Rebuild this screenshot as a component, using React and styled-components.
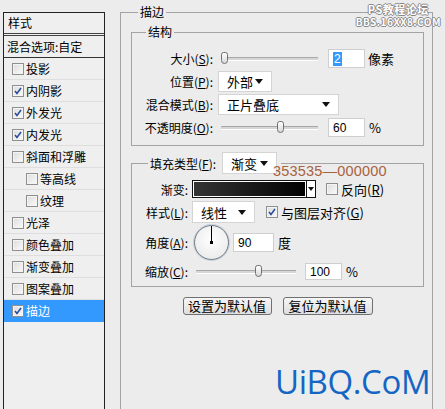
import React from "react";
import styled, { createGlobalStyle } from "styled-components";

const GlobalStyle = createGlobalStyle`
  body {
    margin: 0;
    background: #ececec;
    font-family: "Noto Sans CJK SC", "Liberation Sans", sans-serif;
    font-size: 12px;
    color: #000;
  }
`;

const Page = styled.div`
  position: relative;
  width: 445px;
  height: 409px;
  overflow: hidden;
  display: flex;
  align-items: flex-start;
  background: #ececec;
`;

/* ---------- left style list ---------- */
const StyleList = styled.div`
  box-sizing: border-box;
  width: 102px;
  height: 420px;
  margin: 12px 0 0 3px;
  border: 1px solid #222;
  border-bottom: none;
  background: #efefef;
  display: flex;
  flex-direction: column;
`;

const ListHead = styled.div`
  height: 20px;
  line-height: 20px;
  padding-left: 4px;
  font-size: 12px;
  border-bottom: 3px double #444;
`;

const BlendRow = styled.div`
  height: 21px;
  line-height: 21px;
  padding-left: 3px;
  border-bottom: 1px solid #333;
  white-space: nowrap;
`;

const ListRow = styled.div`
  box-sizing: border-box;
  height: 22px;
  display: flex;
  align-items: center;
  gap: 2px;
  padding-left: ${p => (p.$indent ? 22 : 8)}px;
  border-bottom: 1px solid ${p => (p.$active ? "#3399ff" : "#dedede")};
  background: ${p => (p.$active ? "#3399ff" : "transparent")};
  color: ${p => (p.$active ? "#fff" : "#000")};
  white-space: nowrap;
`;

const Box = styled.span`
  box-sizing: border-box;
  width: 12px;
  height: 12px;
  flex: none;
  border: 1px solid #8e8f8f;
  background: linear-gradient(135deg, #dcdcdc, #fafafa);
  display: flex;
  align-items: center;
  justify-content: center;
  box-shadow: inset 0 0 0 1px #f4f4f4;
`;

const Check = ({ on }) => (
  <Box>
    {on && (
      <svg width="8" height="8" viewBox="0 0 8 8">
        <path d="M1 4 L3 6.5 L7 1" fill="none" stroke="#2b4f9c" strokeWidth="1.6" />
      </svg>
    )}
  </Box>
);

/* ---------- right settings ---------- */
const Main = styled.fieldset`
  box-sizing: border-box;
  width: 313px;
  height: 440px;
  margin: 4px 0 0 15px;
  padding: 4px 8px 0 10px;
  border: 1px solid #a3a3a3;
  min-inline-size: 0;
`;

const Legend = styled.legend`
  margin-left: ${p => p.$offset || 7}px;
  padding: 0 2px;
  line-height: 16px;
`;

const Group = styled.fieldset`
  box-sizing: border-box;
  margin: ${p => p.$top || 0}px 0 0 0;
  padding: ${p => p.$pad};
  border: 1px solid #a3a3a3;
  min-inline-size: 0;
`;

const FillLegend = styled.legend`
  margin-left: 16px;
  padding: 0 4px 0 2px;
  display: flex;
  align-items: center;
  gap: 6px;
  height: 22px;
`;

const Row = styled.div`
  display: flex;
  align-items: center;
  height: ${p => p.$h || 23}px;
`;

const Label = styled.div`
  width: ${p => p.$w}px;
  flex: none;
  text-align: right;
  margin-right: ${p => p.$gap || 5}px;
  white-space: nowrap;
`;

const Track = styled.div`
  position: relative;
  width: ${p => p.$w}px;
  height: 2px;
  margin-left: ${p => p.$ml || 0}px;
  border-top: 1px solid #a8a8a8;
  border-bottom: 1px solid #fff;
  background: #d6d6d6;
`;

const Thumb = styled.div`
  position: absolute;
  top: -6px;
  width: 7px;
  height: 12px;
  box-sizing: border-box;
  border: 1px solid #6f6f6f;
  border-radius: 3px 3px 4px 4px;
  background: linear-gradient(#ffffff, #d8d8d8);
`;

const Slider = ({ w, pos, ml }) => (
  <Track $w={w} $ml={ml}>
    <Thumb style={{ left: pos }} />
  </Track>
);

const Field = styled.div`
  box-sizing: border-box;
  width: ${p => p.$w}px;
  height: ${p => p.$h || 19}px;
  margin-left: ${p => p.$ml || 0}px;
  border: 1px solid #cfcfcf;
  background: #fff;
  display: flex;
  align-items: center;
  padding-left: 4px;
  font-family: "Liberation Sans", Arial, sans-serif;
  font-size: 12px;
`;

const Selected = styled.span`
  background: #3399ff;
  color: #fff;
  padding: 0 1px;
  line-height: 14px;
`;

const Unit = styled.span`
  margin-left: ${p => p.$ml || 4}px;
  font-size: ${p => p.$size || 13}px;
`;

const Select = styled.div`
  box-sizing: border-box;
  width: ${p => p.$w}px;
  height: ${p => p.$h || 21}px;
  border: 1px solid #d4d4d4;
  background: #fff;
  display: flex;
  align-items: center;
  justify-content: space-between;
  padding: 0 8px 0 8px;
  font-size: 13px;
`;

const Arrow = styled.span`
  width: 0;
  height: 0;
  border-left: 4px solid transparent;
  border-right: 4px solid transparent;
  border-top: 5px solid #111;
`;

const GradientPick = styled.div`
  display: flex;
  height: 16px;
  border: 1px solid #111;
`;

const GradientBar = styled.div`
  width: 113px;
  background: linear-gradient(90deg, #353535, #000);
  box-shadow: inset 0 0 0 1px #fff;
`;

const GradientArrow = styled.div`
  width: 8px;
  background: #fff;
  border-left: 1px solid #111;
  display: flex;
  align-items: center;
  justify-content: center;
  & > span {
    border-left-width: 3px;
    border-right-width: 3px;
    border-top-width: 4px;
  }
`;

const CheckLabel = styled.div`
  display: flex;
  align-items: center;
  gap: 3px;
  margin-left: ${p => p.$ml}px;
  font-size: 13px;
  line-height: 15px;
`;

const Dial = styled.div`
  position: relative;
  box-sizing: border-box;
  width: 35px;
  height: 35px;
  border-radius: 50%;
  border: 1px solid #6d7a8a;
  background: radial-gradient(circle at 50% 40%, #ffffff, #e6e6e6);
  box-shadow: 0 0 0 1px #c9d0d8;
  margin-left: 2px;
  &::before {
    content: "";
    position: absolute;
    left: 16px;
    top: 0;
    width: 1px;
    height: 17px;
    background: #000;
  }
  &::after {
    content: "";
    position: absolute;
    left: 15px;
    top: 15px;
    width: 3px;
    height: 3px;
    background: #000;
  }
`;

const Buttons = styled.div`
  display: flex;
  justify-content: center;
  gap: 11px;
  margin-top: 10px;
`;

const Button = styled.button`
  box-sizing: border-box;
  width: ${p => p.$w}px;
  height: 18px;
  padding: 0;
  border: 1px solid #707070;
  border-radius: 3px;
  background: linear-gradient(#f6f6f6, #dedede);
  font-family: "Noto Sans CJK SC", sans-serif;
  font-size: 13px;
  line-height: 16px;
  color: #000;
`;

const Hex = styled.div`
  position: absolute;
  left: 273px;
  top: 165px;
  font-family: "Liberation Sans", Arial, sans-serif;
  font-size: 14.5px;
  line-height: 13px;
  color: #a7623e;
  letter-spacing: 0.2px;
`;

const Stamp = styled.div`
  position: absolute;
  right: 4px;
  top: 4px;
  display: flex;
  flex-direction: column;
  align-items: center;
  gap: 2px;
  color: #fff;
  font-weight: bold;
  text-shadow: 1px 0 0 #888, -1px 0 0 #888, 0 1px 0 #888, 0 -1px 0 #888;
  letter-spacing: 0.5px;
`;

const StampLine = styled.div`
  font-size: ${p => p.$size}px;
  line-height: ${p => p.$size}px;
`;

const Site = styled.div`
  position: absolute;
  left: 275px;
  top: 362px;
  font-family: "Open Sans", sans-serif;
  font-size: 33px;
  line-height: 40px;
  color: #1566c4;
  letter-spacing: -0.4px;
`;

const items = [
  { name: "投影", on: false },
  { name: "内阴影", on: true },
  { name: "外发光", on: true },
  { name: "内发光", on: true },
  { name: "斜面和浮雕", on: false },
  { name: "等高线", on: false, indent: true },
  { name: "纹理", on: false, indent: true },
  { name: "光泽", on: false },
  { name: "颜色叠加", on: false },
  { name: "渐变叠加", on: false },
  { name: "图案叠加", on: false },
  { name: "描边", on: true, active: true },
];

export default function App() {
  return (
    <Page>
      <GlobalStyle />
      <StyleList>
        <ListHead>样式</ListHead>
        <BlendRow>混合选项:自定</BlendRow>
        {items.map(it => (
          <ListRow key={it.name} $indent={it.indent} $active={it.active}>
            <Check on={it.on} />
            <span>{it.name}</span>
          </ListRow>
        ))}
      </StyleList>

      <Main>
        <Legend>描边</Legend>
        <Group $pad="7px 0 6px 0">
          <Legend $offset={14}>结构</Legend>
          <Row>
            <Label $w={81}>大小(<u>S</u>):</Label>
            <Slider w={97} pos={0} ml={3} />
            <Field $w={37} $ml={10}><Selected>2</Selected></Field>
            <Unit $ml={3}>像素</Unit>
          </Row>
          <Row>
            <Label $w={81}>位置(<u>P</u>):</Label>
            <Select $w={54}>外部 <Arrow /></Select>
          </Row>
          <Row>
            <Label $w={81}>混合模式(<u>B</u>):</Label>
            <Select $w={121} $h={21}>正片叠底 <Arrow /></Select>
          </Row>
          <Row>
            <Label $w={81}>不透明度(<u>O</u>):</Label>
            <Slider w={97} pos={56} ml={3} />
            <Field $w={37} $ml={10}>60</Field>
            <Unit $ml={4}>%</Unit>
          </Row>
        </Group>

        <Group $top={6} $pad="4px 0 4px 0">
          <FillLegend>
            <span>填充类型(<u>F</u>):</span>
            <Select $w={55} $h={22}>渐变 <Arrow /></Select>
          </FillLegend>
          <Row $h={22}>
            <Label $w={56} $gap={4}>渐变:</Label>
            <GradientPick>
              <GradientBar />
              <GradientArrow><Arrow /></GradientArrow>
            </GradientPick>
            <CheckLabel $ml={10}>
              <Check on={false} />
              <span>反向(<u>R</u>)</span>
            </CheckLabel>
          </Row>
          <Row $h={24}>
            <Label $w={56} $gap={4}>样式(<u>L</u>):</Label>
            <Select $w={63} $h={22}>线性 <Arrow /></Select>
            <CheckLabel $ml={11}>
              <Check on={true} />
              <span>与图层对齐(<u>G</u>)</span>
            </CheckLabel>
          </Row>
          <Row $h={37}>
            <Label $w={56} $gap={4}>角度(<u>A</u>):</Label>
            <Dial />
            <Field $w={41} $ml={4} $h={19}>90</Field>
            <Unit $ml={4}>度</Unit>
          </Row>
          <Row $h={21}>
            <Label $w={56} $gap={6}>缩放(<u>C</u>):</Label>
            <Slider w={100} pos={59} ml={2} />
            <Field $w={37} $ml={9} $h={17}>100</Field>
            <Unit $ml={4}>%</Unit>
          </Row>
        </Group>

        <Buttons>
          <Button $w={89}>设置为默认值</Button>
          <Button $w={90}>复位为默认值</Button>
        </Buttons>
      </Main>

      <Hex>353535—000000</Hex>
      <Stamp>
        <StampLine $size={11}>PS教程论坛</StampLine>
        <StampLine $size={10}>BBS.16XX8.COM</StampLine>
      </Stamp>
      <Site>UiBQ.CoM</Site>
    </Page>
  );
}
